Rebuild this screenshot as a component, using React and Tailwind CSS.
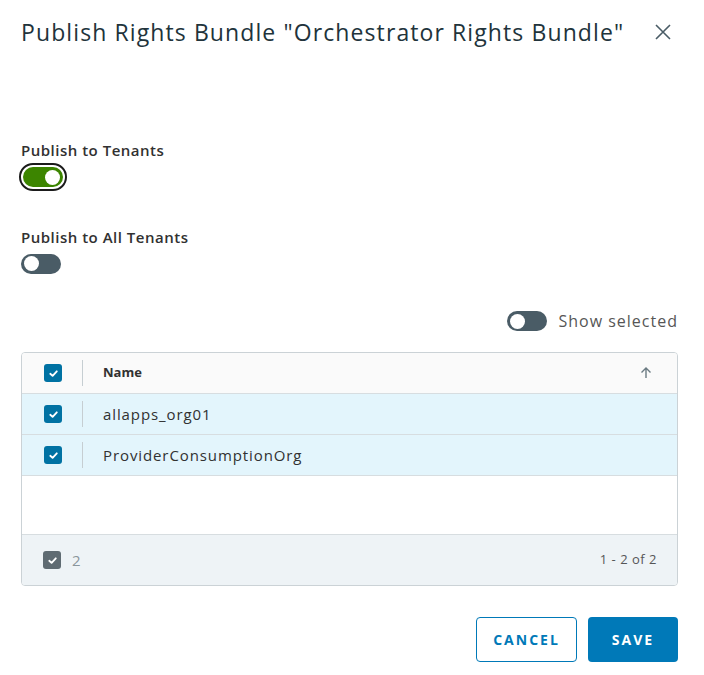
import React from 'react';

function Toggle({ on, focus }) {
  return (
    <span
      className={`inline-flex items-center rounded-full ${
        focus ? 'p-[2px] border-2 border-[#1b1b1b]' : ''
      }`}
    >
      <span
        className={`flex items-center w-[40px] h-[20px] rounded-full px-[3px] ${
          on ? 'bg-[#3c8500] justify-end' : 'bg-[#4a5c66] justify-start'
        }`}
      >
        <span className="w-[15px] h-[15px] rounded-full bg-white" />
      </span>
    </span>
  );
}

function Check({ gray }) {
  return (
    <span
      className={`flex items-center justify-center w-[18px] h-[18px] rounded-[3px] ${
        gray ? 'bg-[#5f6b72]' : 'bg-[#0072a3]'
      }`}
    >
      <svg width="11" height="11" viewBox="0 0 12 12" fill="none">
        <path d="M2.5 6.3 5 8.6 9.6 3.6" stroke="white" strokeWidth="2" strokeLinecap="round" strokeLinejoin="round" />
      </svg>
    </span>
  );
}

function Row({ name }) {
  return (
    <div className="flex items-center h-[41px] bg-[#e3f5fc] border-b border-[#d7dde0]">
      <div className="w-[60px] flex justify-center pl-[2px]">
        <Check />
      </div>
      <div className="w-px h-[26px] bg-[#c6ced2]" />
      <span className="pl-[20px] text-[15px] tracking-[0.9px] text-[#313131]">{name}</span>
    </div>
  );
}

export default function App() {
  return (
    <div
      className="w-[704px] h-[675px] bg-white pl-[21px] pr-[26px] flex flex-col"
      style={{ fontFamily: '"Open Sans", "Noto Sans", sans-serif' }}
    >
      <div className="h-[64px] flex items-center justify-between">
        <h1 className="text-[23px] tracking-[1.1px] text-[#21333b]">Publish Rights Bundle "Orchestrator Rights Bundle"</h1>
        <svg width="18" height="18" viewBox="0 0 18 18" className="mr-[6px]">
          <path d="M2 2 16 16 M16 2 2 16" stroke="#4a5c66" strokeWidth="1.6" />
        </svg>
      </div>

      <div className="mt-[78px] text-[15px] tracking-[0.5px] font-semibold text-[#313131] leading-[16px]">Publish to Tenants</div>
      <div className="mt-[5px] -ml-[2px]">
        <Toggle on focus />
      </div>

      <div className="mt-[38px] text-[15px] tracking-[0.5px] font-semibold text-[#313131] leading-[16px]">Publish to All Tenants</div>
      <div className="mt-[8px]">
        <Toggle />
      </div>

      <div className="mt-[34px] flex items-center justify-end gap-[11px]">
        <Toggle />
        <span className="text-[16px] tracking-[1px] text-[#565656] leading-[20px]">Show selected</span>
      </div>

      <div className="mt-[21px] border border-[#cbd2d6] rounded-[4px] overflow-hidden flex flex-col">
        <div className="flex items-center h-[41px] bg-[#fafafa] border-b border-[#d7dde0]">
          <div className="w-[60px] flex justify-center pl-[2px]">
            <Check />
          </div>
          <div className="w-px h-[26px] bg-[#c6ced2]" />
          <span className="pl-[20px] text-[13px] font-bold text-[#313131] flex-1">Name</span>
          <svg width="14" height="14" viewBox="0 0 14 14" className="mr-[24px]">
            <path d="M7 12V2 M2.5 6.5 7 2 11.5 6.5" stroke="#6a7a82" strokeWidth="1.4" fill="none" />
          </svg>
        </div>
        <Row name="allapps_org01" />
        <Row name="ProviderConsumptionOrg" />
        <div className="h-[59px] bg-white border-b border-[#d7dde0]" />
        <div className="h-[50px] bg-[#eef3f6] flex items-center pl-[21px] pr-[20px]">
          <Check gray />
          <span className="ml-[11px] text-[15px] text-[#8a969c]">2</span>
          <span className="ml-auto text-[13px] tracking-[0.5px] text-[#565656]">1 - 2 of 2</span>
        </div>
      </div>

      <div className="mt-[31px] flex justify-end gap-[11px]">
        <button className="w-[101px] h-[45px] rounded-[4px] border border-[#0079b8] text-[#0079b8] text-[14px] font-bold tracking-[2px]">
          CANCEL
        </button>
        <button className="w-[90px] h-[45px] rounded-[4px] bg-[#0079b8] text-white text-[14px] font-bold tracking-[2px]">
          SAVE
        </button>
      </div>
    </div>
  );
}
